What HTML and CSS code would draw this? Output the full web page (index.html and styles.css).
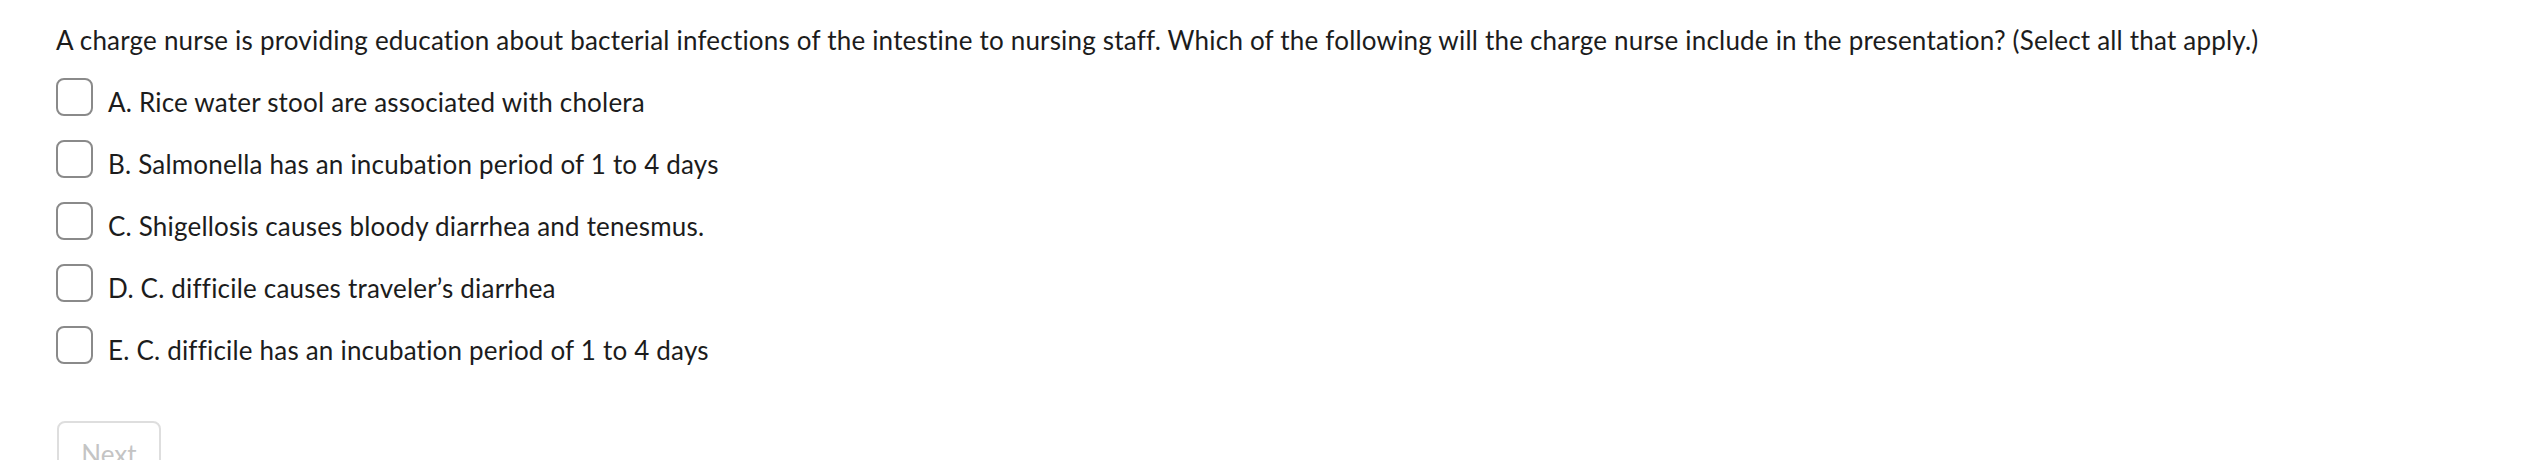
FILE: index.html
```html
<!DOCTYPE html>
<html lang="en">
<head>
<meta charset="utf-8">
<title>Question</title>
<link rel="stylesheet" href="styles.css">
</head>
<body>
<main class="quiz">
  <p class="question">A charge nurse is providing education about bacterial infections of the intestine to nursing staff. Which of the following will the charge nurse include in the presentation? (Select all that apply.)</p>
  <ul class="options">
    <li class="option"><span class="box"></span><span class="label">A. Rice water stool are associated with cholera</span></li>
    <li class="option"><span class="box"></span><span class="label">B. Salmonella has an incubation period of 1 to 4 days</span></li>
    <li class="option"><span class="box"></span><span class="label">C. Shigellosis causes bloody diarrhea and tenesmus.</span></li>
    <li class="option"><span class="box"></span><span class="label">D. C. difficile causes traveler’s diarrhea</span></li>
    <li class="option"><span class="box"></span><span class="label">E. C. difficile has an incubation period of 1 to 4 days</span></li>
  </ul>
  <button class="next" type="button" disabled>Next</button>
</main>
</body>
</html>
```

FILE: styles.css
```css
html, body {
  margin: 0;
  padding: 0;
  background: #ffffff;
}

body {
  font-family: "Lato", "Liberation Sans", sans-serif;
  font-size: 26px;
  color: #1c1c1c;
}

.quiz {
  padding: 21px 0 0 56px;
}

.question {
  margin: 0;
  line-height: 38px;
  letter-spacing: 0.2px;
}

.options {
  list-style: none;
  margin: 19px 0 0 0;
  padding: 0;
  display: flex;
  flex-direction: column;
  gap: 24px;
}

.option {
  display: flex;
  align-items: flex-start;
  gap: 15px;
  height: 38px;
}

.box {
  box-sizing: border-box;
  width: 37px;
  height: 38px;
  border: 2px solid #8a8a8a;
  border-radius: 8px;
  flex: none;
}

.label {
  line-height: 38px;
  padding-top: 5px;
  letter-spacing: 0.2px;
}

.next {
  margin: 57px 0 0 1px;
  box-sizing: border-box;
  width: 104px;
  height: 66px;
  border: 2px solid #dedede;
  border-radius: 8px;
  background: #ffffff;
  color: #c4c4c4;
  font-family: inherit;
  font-size: 26px;
  text-align: center;
  padding: 0;
  line-height: 30px;
  display: block;
}
```
